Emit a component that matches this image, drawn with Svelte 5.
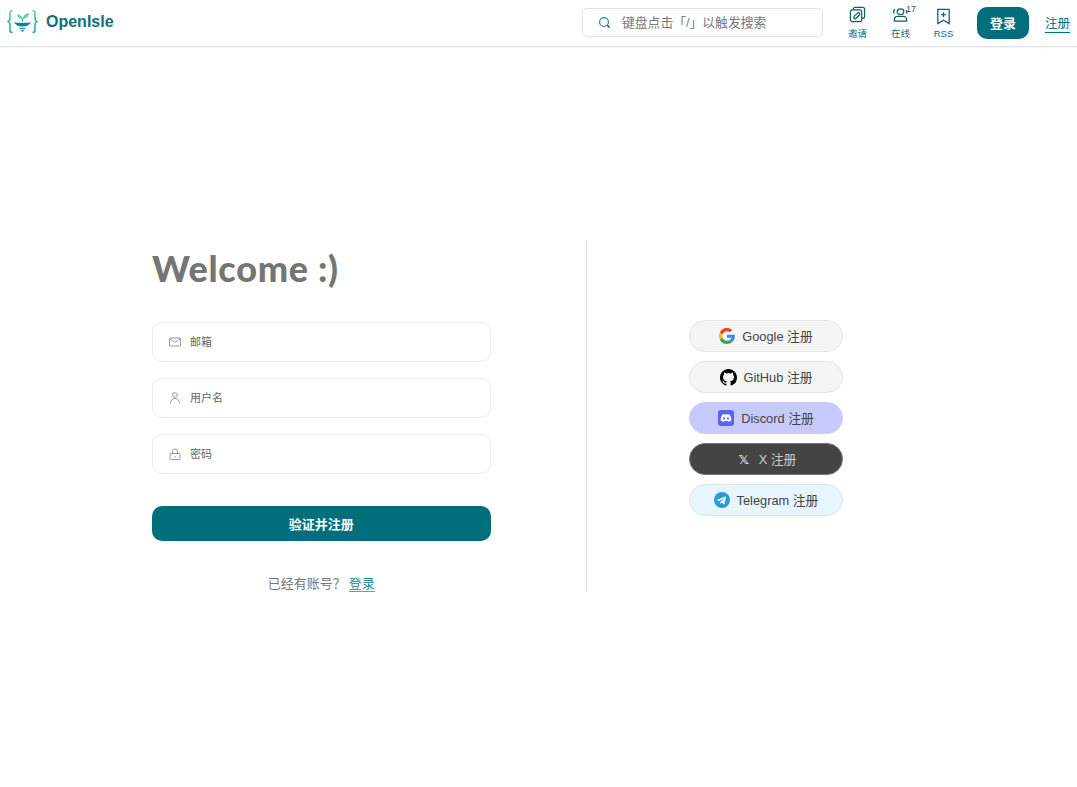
<script lang="ts">
    const providers = [
        { id: 'google', label: 'Google 注册' },
        { id: 'github', label: 'GitHub 注册' },
        { id: 'discord', label: 'Discord 注册' },
        { id: 'x', label: 'X 注册' },
        { id: 'telegram', label: 'Telegram 注册' }
    ];
</script>

<header class="header">
    <a class="brand" href="#home">
        <svg class="logo" viewBox="0 0 32 26" width="32" height="26" fill="none">
            <defs>
                <linearGradient id="lg" x1="0" y1="0" x2="0" y2="1">
                    <stop offset="0" stop-color="#5fcfa8" />
                    <stop offset="1" stop-color="#2b9db5" />
                </linearGradient>
            </defs>
            <path d="M5.500 1.500C3 1.500 3 3 3 5.500v3.500C3 11.500 2 12.300 .5 12.500 2 12.700 3 13.500 3 16v3.500C3 22 3 23.500 5.500 23.500" stroke="url(#lg)" stroke-width="1.600" />
            <path d="M25.500 1.500c2.500 0 2.500 1.500 2.500 4v3.500c0 2.500 1 3.300 2.500 3.500-1.500.2-2.500 1-2.500 3.500v3.500c0 2.500 0 4-2.500 4" stroke="url(#lg)" stroke-width="1.600" />
            <path d="M15.500 10C15 7 12.500 5.500 10 5.500 10.500 8.500 13 10 15.500 10z" fill="#5fcfa8" />
            <path d="M15.500 10C16 6.500 18.500 4.500 22 4 21.500 7.500 19 10 15.500 10z" fill="#5fcfa8" />
            <path d="M15.500 9.500V13" stroke="#3fb59a" stroke-width="1.200" />
            <path d="M7 13c3 1.200 14 1.200 17 0-1.500 3-4.500 4.500-8.500 4.500S8.500 16 7 13z" fill="#137f92" />
            <path d="M12 18.700h7l-1 1.500h-5z" fill="#2b9db5" />
            <path d="M13.500 21h4l-2 2.200z" fill="#2b9db5" />
        </svg>
        <span class="brand-name">OpenIsle</span>
    </a>

    <div class="search">
        <svg class="search-icon" viewBox="0 0 14 14" width="13" height="13" fill="none">
            <circle cx="6.500" cy="6.500" r="4.800" stroke="#1f8a94" stroke-width="1.300" />
            <path d="M10 10l2.500 2.500" stroke="#1f2f35" stroke-width="1.300" />
        </svg>
        <span>键盘点击「/」以触发搜索</span>
    </div>

    <nav class="tools">
        <a class="tool" href="#invite">
            <svg viewBox="0 0 18 18" width="17" height="17" fill="none" stroke="#0f5f68" stroke-width="1.300">
                <rect x="1.500" y="4" width="12" height="12.500" rx="2" />
                <path d="M4.500 4V3.500a2 2 0 0 1 2-2h8a2 2 0 0 1 2 2V11a2 2 0 0 1-2 2h-1" />
                <path d="M6 10.500l3-3a1.400 1.400 0 0 1 2 2l-3.500 3.500a1.400 1.400 0 0 1-2-2l.5-.5" />
            </svg>
            <span>邀请</span>
        </a>
        <a class="tool" href="#online">
            <svg viewBox="0 0 18 18" width="17" height="17" fill="none" stroke="#0f5f68" stroke-width="1.300">
                <ellipse cx="9" cy="6" rx="3.500" ry="3" />
                <path d="M2.500 16v-1.500a3.500 3.500 0 0 1 3.500-3.500h6a3.500 3.500 0 0 1 3.500 3.500V16z" />
                <path d="M3 3.500a3.500 3.500 0 0 0-.5 4.500M14.800 4.500a3.500 3.500 0 0 1 .7 3.500" />
            </svg>
            <sup class="count">17</sup>
            <span>在线</span>
        </a>
        <a class="tool" href="#rss">
            <svg viewBox="0 0 18 18" width="17" height="17" fill="none" stroke="#0f5f68" stroke-width="1.300">
                <path d="M3 1.500h12v15L9 13l-6 3.500z" />
                <path d="M9 4.500v5M6.500 7h5" />
            </svg>
            <span>RSS</span>
        </a>
        <a class="login-btn" href="#login"><span>登录</span></a>
        <a class="signup-link" href="#signup">注册</a>
    </nav>
</header>

<main class="page">
    <section class="form-side">
        <h1 class="welcome">Welcome :)</h1>

        <div class="fields">
            <label class="field">
                <svg viewBox="0 0 14 14" width="14" height="14" fill="none" stroke="#9a9a9a">
                    <rect x="1.500" y="3" width="11" height="8" rx="0.500" />
                    <path d="M1.500 3.500L7 7.500l5.500-4" />
                </svg>
                <input placeholder="邮箱" />
            </label>
            <label class="field">
                <svg viewBox="0 0 14 14" width="14" height="14" fill="none" stroke="#9a9a9a">
                    <circle cx="7" cy="4" r="2.300" />
                    <path d="M2.500 12.500c0-3 2-5 4.500-5s4.500 2 4.500 5" />
                </svg>
                <input placeholder="用户名" />
            </label>
            <label class="field">
                <svg viewBox="0 0 14 14" width="14" height="14" fill="none" stroke="#9a9a9a">
                    <rect x="2" y="6.500" width="10" height="6" rx="0.500" />
                    <path d="M4.500 6.500V4.500a2.500 2.500 0 0 1 5 0v2M7 9v1.500" />
                </svg>
                <input placeholder="密码" type="text" />
            </label>
        </div>

        <button class="submit">验证并注册</button>

        <p class="switch">已经有账号？<a href="#login">登录</a></p>
    </section>

    <div class="divider"></div>

    <section class="social-side">
        {#each providers as p}
            <button class="social {p.id}">
                {#if p.id === 'google'}
                    <svg viewBox="0 0 48 48" width="16" height="16">
                        <path fill="#FFC107" d="M10.500 28.700a14.400 14.400 0 0 1 0-9.400l-8-6.200a24 24 0 0 0 0 21.600z" />
                        <path fill="#EA4335" d="M24 9.500c3.500 0 6.700 1.200 9.200 3.600l6.900-6.900A24 24 0 0 0 2.500 13.100l8 6.200C12.400 13.600 17.700 9.500 24 9.500z" />
                        <path fill="#34A853" d="M24 48c6.500 0 12-2.100 16-5.800l-7.700-6c-2.100 1.400-4.900 2.300-8.300 2.300-6.300 0-11.600-4.200-13.500-9.800l-8 6.200A24 24 0 0 0 24 48z" />
                        <path fill="#4285F4" d="M47.500 24.500c0-1.600-.1-3.100-.4-4.500H24v9h13.200c-.6 3-2.300 5.500-4.900 7.200l7.700 6c4.500-4.200 7.500-10.300 7.500-17.700z" />
                    </svg>
                {:else if p.id === 'github'}
                    <svg viewBox="0 0 16 16" width="17" height="17">
                        <path fill="#000" d="M8 0C3.580 0 0 3.580 0 8c0 3.540 2.290 6.530 5.470 7.590.4.070.55-.17.55-.38 0-.19-.01-.82-.01-1.490-2.010.37-2.530-.49-2.690-.94-.09-.23-.48-.94-.82-1.130-.28-.15-.68-.52-.01-.53.63-.01 1.080.58 1.230.82.720 1.210 1.870.87 2.330.66.070-.52.280-.87.510-1.070-1.780-.2-3.640-.89-3.640-3.950 0-.87.310-1.590.820-2.150-.08-.2-.36-1.020.08-2.120 0 0 .67-.21 2.200.82a7.500 7.500 0 0 1 4 0c1.530-1.040 2.200-.82 2.200-.82.440 1.100.160 1.920.080 2.120.510.560.820 1.270.820 2.150 0 3.070-1.870 3.750-3.650 3.950.290.250.540.730.540 1.480 0 1.070-.01 1.930-.01 2.200 0 .21.150.46.550.38A8.010 8.010 0 0 0 16 8c0-4.420-3.580-8-8-8z" />
                    </svg>
                {:else if p.id === 'discord'}
                    <svg viewBox="0 0 16 16" width="16" height="16">
                        <rect width="16" height="16" rx="3" fill="#5865f2" />
                        <path fill="#fff" d="M11.700 4.700a8.500 8.500 0 0 0-2.200-.7l-.3.500a8 8 0 0 0-2.400 0L6.500 4a8.500 8.500 0 0 0-2.200.7C2.900 6.700 2.600 8.700 2.700 10.600a8.700 8.700 0 0 0 2.700 1.300l.6-.9-.9-.4.200-.2a6.200 6.200 0 0 0 5.400 0l.2.200-.9.400.6.900a8.700 8.700 0 0 0 2.700-1.300c.2-2.200-.4-4.200-1.600-5.900zM6 9.500c-.5 0-1-.5-1-1.100s.4-1.100 1-1.100 1 .5 1 1.100-.4 1.100-1 1.100zm4 0c-.5 0-1-.5-1-1.100s.4-1.100 1-1.100 1 .5 1 1.100-.4 1.100-1 1.100z" />
                    </svg>
                {:else if p.id === 'x'}
                    <span class="x-glyph">𝕏</span>
                {:else}
                    <svg viewBox="0 0 16 16" width="16" height="16">
                        <circle cx="8" cy="8" r="8" fill="#229ed9" />
                        <path fill="#fff" d="M3.300 7.800l8.100-3.200c.4-.1.700.1.600.7l-1.400 6.500c-.1.500-.4.600-.8.400L7.700 10.600l-1 1c-.1.100-.2.200-.5.200l.2-2.100 3.800-3.500c.2-.2 0-.2-.2-.1L5.300 9 3.300 8.400c-.4-.1-.4-.4 0-.6z" />
                    </svg>
                {/if}
                <span class="social-label">{p.label}</span>
            </button>
        {/each}
    </section>
</main>

<style>
    :global(body) {
        margin: 0;
        background: #fff;
        font-family: "Liberation Sans", "Noto Sans CJK SC", sans-serif;
        color: #333;
    }

    a {
        text-decoration: none;
    }

    .header {
        display: flex;
        align-items: center;
        height: 46px;
        border-bottom: 1px solid #e4e4e4;
        box-shadow: 0 1px 0 #f4f4f4;
        padding: 0 7px;
    }

    .brand {
        display: flex;
        align-items: center;
        gap: 7px;
        margin-top: -2px;
    }

    .brand-name {
        font-size: 16px;
        font-weight: 700;
        color: #0f6f7a;
    }

    .search {
        margin-left: auto;
        margin-bottom: 1px;
        display: flex;
        align-items: center;
        box-sizing: border-box;
        width: 241px;
        height: 29px;
        border: 1px solid #e2e2e2;
        border-radius: 5px;
        padding-left: 15px;
        gap: 11px;
        font-size: 12.800px;
        color: #777;
    }

    .search span {
        padding-bottom: 2px;
    }

    .tools {
        display: flex;
        align-items: center;
        margin-left: 13px;
    }

    .tool {
        position: relative;
        display: flex;
        flex-direction: column;
        align-items: center;
        width: 43px;
        gap: 3px;
        font-size: 9.500px;
        color: #0f6f7a;
    }

    .count {
        position: absolute;
        top: -3px;
        left: 27px;
        font-size: 9px;
        line-height: 12px;
        margin: 0;
        color: #0f5f68;
    }

    .login-btn {
        margin-left: 12px;
        display: flex;
        align-items: center;
        justify-content: center;
        width: 52px;
        height: 32px;
        border-radius: 10px;
        background: #016f7b;
        color: #fff;
        font-size: 13px;
        font-weight: 700;
    }

    .login-btn span {
        padding-bottom: 2px;
    }

    .signup-link {
        margin-left: 16px;
        font-size: 12.500px;
        color: #016f7b;
        border-bottom: 1px solid #016f7b;
    }

    .page {
        display: flex;
        padding-top: 194px;
    }

    .form-side {
        box-sizing: border-box;
        width: 586px;
        height: 351px;
        padding: 0 95.500px 0 152px;
        display: flex;
        flex-direction: column;
    }

    .welcome {
        margin: 0;
        height: 54px;
        line-height: 54px;
        font-family: Lato, sans-serif;
        font-size: 36px;
        font-weight: 900;
        letter-spacing: 0.700px;
        color: #757575;
    }

    .fields {
        margin-top: 27px;
        display: flex;
        flex-direction: column;
        gap: 16px;
    }

    .field {
        display: flex;
        align-items: center;
        gap: 6px;
        box-sizing: border-box;
        height: 40px;
        border: 1px solid #ececec;
        border-radius: 10px;
        padding-left: 15px;
    }

    .field input {
        flex: 1;
        min-width: 0;
        border: none;
        outline: none;
        background: none;
        font-family: inherit;
        font-size: 11px;
    }

    .field input::placeholder {
        color: #666;
    }

    .submit {
        flex-shrink: 0;
        margin-top: 32px;
        height: 35px;
        border: none;
        border-radius: 10px;
        background: #016f7b;
        color: #fff;
        font-family: inherit;
        font-size: 13px;
        font-weight: 700;
    }

    .switch {
        margin: 32px 0 0;
        text-align: center;
        font-size: 13px;
        color: #777;
    }

    .switch a {
        display: inline-block;
        line-height: 15px;
        margin-left: 3px;
        color: #2a8a94;
        border-bottom: 1px solid #5ea6ad;
    }

    .divider {
        width: 1px;
        height: 351px;
        background: #e2e2e2;
    }

    .social-side {
        box-sizing: border-box;
        height: 351px;
        padding: 79px 0 0 102px;
        display: flex;
        flex-direction: column;
        gap: 9px;
    }

    .social {
        display: flex;
        align-items: center;
        justify-content: center;
        gap: 7px;
        box-sizing: border-box;
        width: 154px;
        height: 32px;
        border: 1px solid #e6e6e6;
        border-radius: 16px;
        background: #f5f5f5;
        font-family: inherit;
        font-size: 12.800px;
        color: #444;
        padding: 0;
    }

    .social-label {
        padding-bottom: 2px;
    }

    .social.discord {
        background: #c8caff;
        border-color: #c8caff;
    }

    .social.x {
        background: #444;
        border-color: #777;
        color: #ccc;
    }

    .social.telegram {
        background: #e6f5fe;
        border-color: #d8e6ee;
    }

    .x-glyph {
        width: 16px;
        text-align: center;
        font-family: "DejaVu Sans", sans-serif;
        font-size: 13px;
        font-weight: 700;
        color: #ddd;
    }
</style>
